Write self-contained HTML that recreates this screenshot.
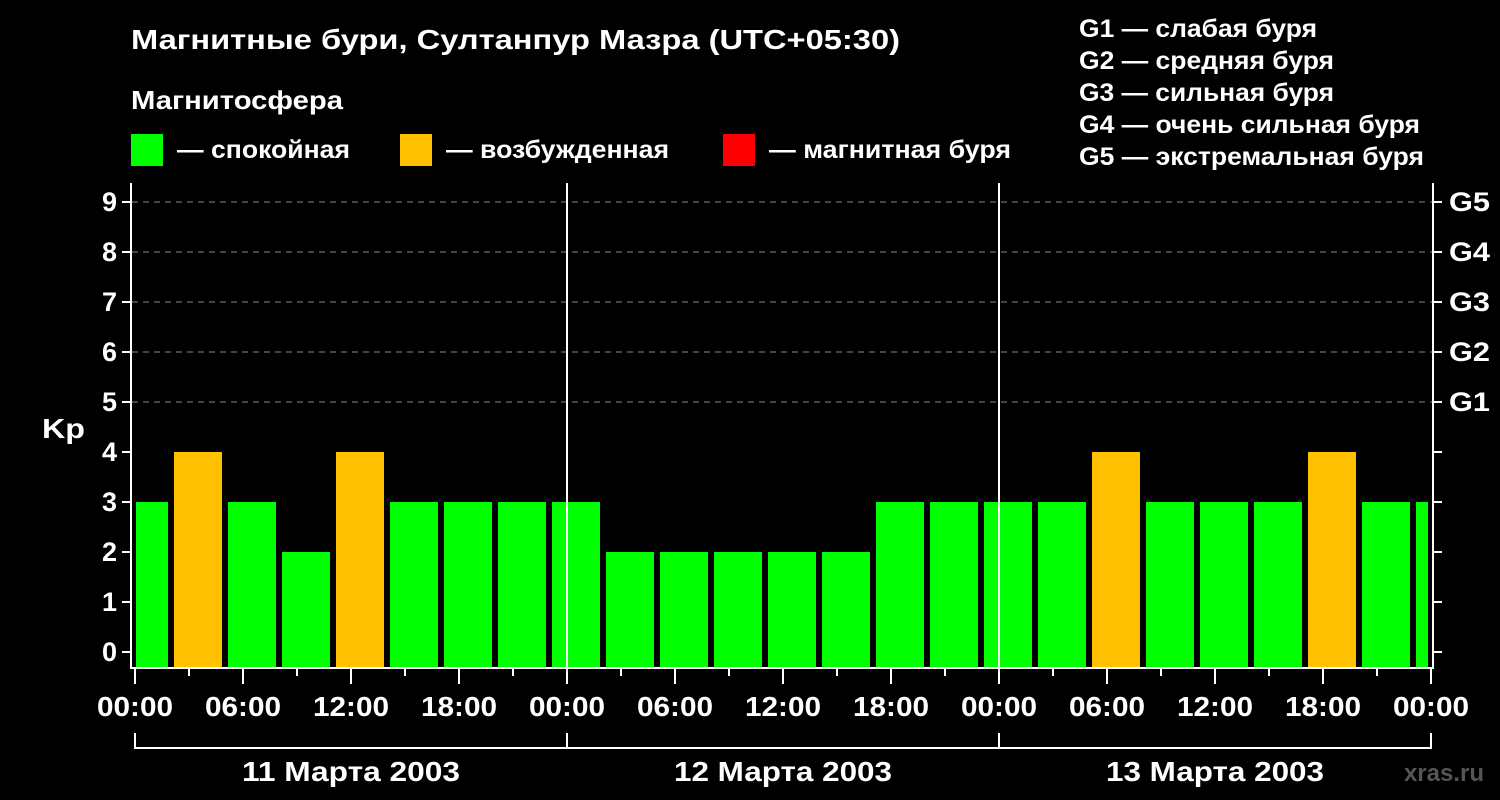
<!DOCTYPE html>
<html><head><meta charset="utf-8"><style>body{margin:0;background:#000}svg{display:block}text{font-family:"Liberation Sans",sans-serif;font-weight:bold;fill:#fff}</style></head><body>
<svg width="1500" height="800" viewBox="0 0 1500 800">
<rect width="1500" height="800" fill="#000"/>
<text x="131" y="49" font-size="28" textLength="769" lengthAdjust="spacingAndGlyphs">Магнитные бури, Султанпур Мазра (UTC+05:30)</text>
<text x="131" y="109" font-size="26" textLength="212" lengthAdjust="spacingAndGlyphs">Магнитосфера</text>
<rect x="131" y="134" width="32" height="32" fill="#00ff00"/><text x="177" y="158" font-size="25" textLength="173" lengthAdjust="spacingAndGlyphs">— спокойная</text>
<rect x="400" y="134" width="32" height="32" fill="#ffc000"/><text x="446" y="158" font-size="25" textLength="223" lengthAdjust="spacingAndGlyphs">— возбужденная</text>
<rect x="723" y="134" width="32" height="32" fill="#ff0000"/><text x="769" y="158" font-size="25" textLength="242" lengthAdjust="spacingAndGlyphs">— магнитная буря</text>
<g font-size="25"><text x="1079" y="37" textLength="238" lengthAdjust="spacingAndGlyphs">G1 — слабая буря</text><text x="1079" y="69" textLength="255" lengthAdjust="spacingAndGlyphs">G2 — средняя буря</text><text x="1079" y="101" textLength="255" lengthAdjust="spacingAndGlyphs">G3 — сильная буря</text><text x="1079" y="133" textLength="341" lengthAdjust="spacingAndGlyphs">G4 — очень сильная буря</text><text x="1079" y="165" textLength="345" lengthAdjust="spacingAndGlyphs">G5 — экстремальная буря</text></g>
<g stroke="#888" stroke-width="1" stroke-dasharray="6,5"><line x1="132" y1="202" x2="1432" y2="202"/><line x1="132" y1="252" x2="1432" y2="252"/><line x1="132" y1="302" x2="1432" y2="302"/><line x1="132" y1="352" x2="1432" y2="352"/><line x1="132" y1="402" x2="1432" y2="402"/></g>
<rect x="136" y="502" width="32" height="166" fill="#00ff00"/>
<g fill="#00ff00">
<rect x="228" y="502" width="48" height="166"/><rect x="282" y="552" width="48" height="116"/><rect x="390" y="502" width="48" height="166"/><rect x="444" y="502" width="48" height="166"/><rect x="498" y="502" width="48" height="166"/><rect x="552" y="502" width="48" height="166"/><rect x="606" y="552" width="48" height="116"/><rect x="660" y="552" width="48" height="116"/><rect x="714" y="552" width="48" height="116"/><rect x="768" y="552" width="48" height="116"/><rect x="822" y="552" width="48" height="116"/><rect x="876" y="502" width="48" height="166"/><rect x="930" y="502" width="48" height="166"/><rect x="984" y="502" width="48" height="166"/><rect x="1038" y="502" width="48" height="166"/><rect x="1146" y="502" width="48" height="166"/><rect x="1200" y="502" width="48" height="166"/><rect x="1254" y="502" width="48" height="166"/><rect x="1362" y="502" width="48" height="166"/><rect x="1416" y="502" width="12" height="166"/></g>
<g fill="#ffc000"><rect x="174" y="452" width="48" height="216"/><rect x="336" y="452" width="48" height="216"/><rect x="1092" y="452" width="48" height="216"/><rect x="1308" y="452" width="48" height="216"/></g>
<g stroke="#fff" stroke-width="2" fill="none">
<polyline points="131,183 131,668 1433,668 1433,183"/>
<line x1="567" y1="183" x2="567" y2="668"/><line x1="999" y1="183" x2="999" y2="668"/>
</g>
<g stroke="#fff" stroke-width="2">
<path d="M122 202h9M122 252h9M122 302h9M122 352h9M122 402h9M122 452h9M122 502h9M122 552h9M122 602h9M122 652h9"/>
<path d="M1433 202h9M1433 252h9M1433 302h9M1433 352h9M1433 402h9M1433 452h9M1433 502h9M1433 552h9M1433 602h9M1433 652h9"/>
<path d="M135 668v16M189 668v8M243 668v16M297 668v8M351 668v16M405 668v8M459 668v16M513 668v8M567 668v16M621 668v8M675 668v16M729 668v8M783 668v16M837 668v8M891 668v16M945 668v8M999 668v16M1053 668v8M1107 668v16M1161 668v8M1215 668v16M1269 668v8M1323 668v16M1377 668v8M1431 668v16"/>
<path d="M135 733v16M135 748h1296M567 733v16M999 733v16M1431 733v16"/>
</g>
<g font-size="27" text-anchor="end"><text x="117" y="211">9</text><text x="117" y="261">8</text><text x="117" y="311">7</text><text x="117" y="361">6</text><text x="117" y="411">5</text><text x="117" y="461">4</text><text x="117" y="511">3</text><text x="117" y="561">2</text><text x="117" y="611">1</text><text x="117" y="661">0</text></g>
<text x="42" y="438" font-size="28" textLength="43" lengthAdjust="spacingAndGlyphs">Kp</text>
<g font-size="27"><text x="1449" y="211" textLength="41" lengthAdjust="spacingAndGlyphs">G5</text><text x="1449" y="261" textLength="41" lengthAdjust="spacingAndGlyphs">G4</text><text x="1449" y="311" textLength="41" lengthAdjust="spacingAndGlyphs">G3</text><text x="1449" y="361" textLength="41" lengthAdjust="spacingAndGlyphs">G2</text><text x="1449" y="411" textLength="41" lengthAdjust="spacingAndGlyphs">G1</text></g>
<g font-size="28">
<text x="97" y="716" textLength="76" lengthAdjust="spacingAndGlyphs">00:00</text><text x="205" y="716" textLength="76" lengthAdjust="spacingAndGlyphs">06:00</text><text x="313" y="716" textLength="76" lengthAdjust="spacingAndGlyphs">12:00</text><text x="421" y="716" textLength="76" lengthAdjust="spacingAndGlyphs">18:00</text><text x="529" y="716" textLength="76" lengthAdjust="spacingAndGlyphs">00:00</text><text x="637" y="716" textLength="76" lengthAdjust="spacingAndGlyphs">06:00</text><text x="745" y="716" textLength="76" lengthAdjust="spacingAndGlyphs">12:00</text><text x="853" y="716" textLength="76" lengthAdjust="spacingAndGlyphs">18:00</text><text x="961" y="716" textLength="76" lengthAdjust="spacingAndGlyphs">00:00</text><text x="1069" y="716" textLength="76" lengthAdjust="spacingAndGlyphs">06:00</text><text x="1177" y="716" textLength="76" lengthAdjust="spacingAndGlyphs">12:00</text><text x="1285" y="716" textLength="76" lengthAdjust="spacingAndGlyphs">18:00</text><text x="1393" y="716" textLength="76" lengthAdjust="spacingAndGlyphs">00:00</text>
<text x="242" y="781" textLength="218" lengthAdjust="spacingAndGlyphs">11 Марта 2003</text><text x="674" y="781" textLength="218" lengthAdjust="spacingAndGlyphs">12 Марта 2003</text><text x="1106" y="781" textLength="218" lengthAdjust="spacingAndGlyphs">13 Марта 2003</text></g>
<text x="1484" y="781" font-size="24" text-anchor="end" style="fill:#555">xras.ru</text>
</svg>
</body></html>
